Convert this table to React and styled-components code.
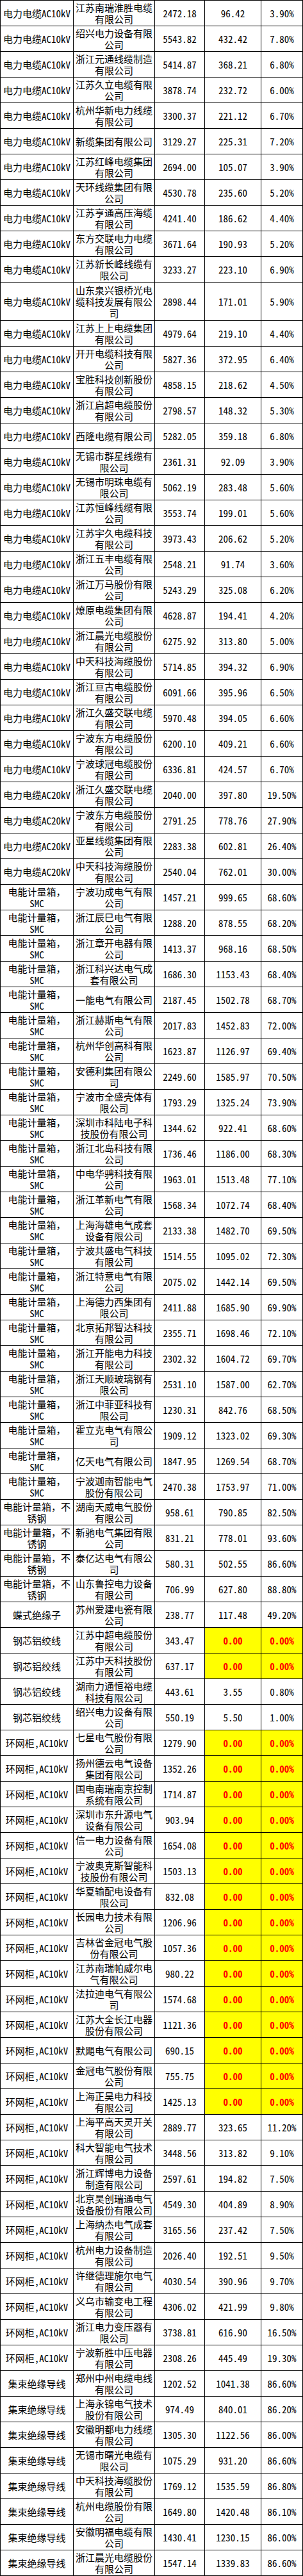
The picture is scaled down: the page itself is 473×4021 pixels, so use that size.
import React from 'react';
import styled, { createGlobalStyle } from 'styled-components';

const GlobalStyle = createGlobalStyle`
  html, body {
    margin: 0;
    padding: 0;
    background: #ffffff;
  }
`;

const Sheet = styled.div`
  display: grid;
  grid-template-columns: 113px 126px 77px 87px 64px;
  gap: 1px;
  padding: 1px;
  width: 473px;
  box-sizing: border-box;
  background: #000000;
  font-family: "Noto Sans Mono CJK SC", "Noto Sans CJK SC", "Liberation Mono", monospace;
  font-size: 15px;
  line-height: 18px;
  color: #000000;
`;

const Cell = styled.div`
  display: flex;
  align-items: center;
  justify-content: center;
  text-align: center;
  padding: 0 2px;
  min-height: ${(p) => (p.$tall ? 59 : 39)}px;
  background: ${(p) => (p.$flag ? '#ffff00' : '#ffffff')};
  color: ${(p) => (p.$flag ? '#ff0000' : '#000000')};
  font-weight: ${(p) => (p.$flag ? 700 : 400)};
  word-break: normal;
  overflow-wrap: anywhere;
`;

const groups = [
  {
    name: '电力电缆AC10kV',
    rows: [
      ['江苏南瑞淮胜电缆有限公司', '2472.18', '96.42', '3.90%'],
      ['绍兴电力设备有限公司', '5543.82', '432.42', '7.80%'],
      ['浙江元通线缆制造有限公司', '5414.87', '368.21', '6.80%'],
      ['江苏久立电缆有限公司', '3878.74', '232.72', '6.00%'],
      ['杭州华新电力线缆有限公司', '3300.37', '221.12', '6.70%'],
      ['新缆集团有限公司', '3129.27', '225.31', '7.20%'],
      ['江苏红峰电缆集团有限公司', '2694.00', '105.07', '3.90%'],
      ['天环线缆集团有限公司', '4530.78', '235.60', '5.20%'],
      ['江苏亨通高压海缆有限公司', '4241.40', '186.62', '4.40%'],
      ['东方交联电力电缆有限公司', '3671.64', '190.93', '5.20%'],
      ['江苏新长峰线缆有限公司', '3233.27', '223.10', '6.90%'],
      ['山东泉兴银桥光电缆科技发展有限公司', '2898.44', '171.01', '5.90%'],
      ['江苏上上电缆集团有限公司', '4979.64', '219.10', '4.40%'],
      ['开开电缆科技有限公司', '5827.36', '372.95', '6.40%'],
      ['宝胜科技创新股份有限公司', '4858.15', '218.62', '4.50%'],
      ['浙江启超电缆股份有限公司', '2798.57', '148.32', '5.30%'],
      ['西隆电缆有限公司', '5282.05', '359.18', '6.80%'],
      ['无锡市群星线缆有限公司', '2361.31', '92.09', '3.90%'],
      ['无锡市明珠电缆有限公司', '5062.19', '283.48', '5.60%'],
      ['江苏恒峰线缆有限公司', '3553.74', '199.01', '5.60%'],
      ['江苏宇久电缆科技有限公司', '3973.43', '206.62', '5.20%'],
      ['浙江五丰电缆有限公司', '2548.21', '91.74', '3.60%'],
      ['浙江万马股份有限公司', '5243.29', '325.08', '6.20%'],
      ['燎原电缆集团有限公司', '4628.87', '194.41', '4.20%'],
      ['浙江晨光电缆股份有限公司', '6275.92', '313.80', '5.00%'],
      ['中天科技海缆股份有限公司', '5714.85', '394.32', '6.90%'],
      ['浙江亘古电缆股份有限公司', '6091.66', '395.96', '6.50%'],
      ['浙江久盛交联电缆有限公司', '5970.48', '394.05', '6.60%'],
      ['宁波东方电缆股份有限公司', '6200.10', '409.21', '6.60%'],
      ['宁波球冠电缆股份有限公司', '6336.81', '424.57', '6.70%'],
    ],
  },
  {
    name: '电力电缆AC20kV',
    rows: [
      ['浙江久盛交联电缆有限公司', '2040.00', '397.80', '19.50%'],
      ['宁波东方电缆股份有限公司', '2791.25', '778.76', '27.90%'],
      ['亚星线缆集团有限公司', '2283.38', '602.81', '26.40%'],
      ['中天科技海缆股份有限公司', '2540.04', '762.01', '30.00%'],
    ],
  },
  {
    name: '电能计量箱，SMC',
    rows: [
      ['宁波功成电气有限公司', '1457.21', '999.65', '68.60%'],
      ['浙江辰巳电气有限公司', '1288.20', '878.55', '68.20%'],
      ['浙江章开电器有限公司', '1413.37', '968.16', '68.50%'],
      ['浙江科兴达电气成套有限公司', '1686.30', '1153.43', '68.40%'],
      ['一能电气有限公司', '2187.45', '1502.78', '68.70%'],
      ['浙江赫斯电气有限公司', '2017.83', '1452.83', '72.00%'],
      ['杭州华创高科有限公司', '1623.87', '1126.97', '69.40%'],
      ['安德利集团有限公司', '2249.60', '1585.97', '70.50%'],
      ['宁波市全盛壳体有限公司', '1793.29', '1325.24', '73.90%'],
      ['深圳市科陆电子科技股份有限公司', '1344.62', '922.41', '68.60%'],
      ['浙江北岛科技有限公司', '1736.46', '1186.00', '68.30%'],
      ['中电华骋科技有限公司', '1963.01', '1513.48', '77.10%'],
      ['浙江革新电气有限公司', '1568.34', '1072.74', '68.40%'],
      ['上海海雄电气成套设备有限公司', '2133.38', '1482.70', '69.50%'],
      ['宁波共盛电气科技有限公司', '1514.55', '1095.02', '72.30%'],
      ['浙江特意电气有限公司', '2075.02', '1442.14', '69.50%'],
      ['上海德力西集团有限公司', '2411.88', '1685.90', '69.90%'],
      ['北京拓邦智达科技有限公司', '2355.71', '1698.46', '72.10%'],
      ['浙江开能电力科技有限公司', '2302.32', '1604.72', '69.70%'],
      ['浙江天顺玻璃钢有限公司', '2531.10', '1587.00', '62.70%'],
      ['浙江中菲亚科技有限公司', '1230.31', '842.76', '68.50%'],
      ['霍立克电气有限公司', '1909.12', '1323.02', '69.30%'],
      ['亿天电气有限公司', '1847.95', '1269.54', '68.70%'],
      ['宁波迦南智能电气股份有限公司', '2470.38', '1753.97', '71.00%'],
    ],
  },
  {
    name: '电能计量箱，不锈钢',
    rows: [
      ['湖南天威电气股份有限公司', '958.61', '790.85', '82.50%'],
      ['新驰电气集团有限公司', '831.21', '778.01', '93.60%'],
      ['泰亿达电气有限公司', '580.31', '502.55', '86.60%'],
      ['山东鲁控电力设备有限公司', '706.99', '627.80', '88.80%'],
    ],
  },
  {
    name: '蝶式绝缘子',
    rows: [['苏州爱建电瓷有限公司', '238.77', '117.48', '49.20%']],
  },
  {
    name: '钢芯铝绞线',
    rows: [
      ['江苏中超电缆股份有限公司', '343.47', '0.00', '0.00%'],
      ['江苏中天科技股份有限公司', '637.17', '0.00', '0.00%'],
      ['湖南力通恒裕电缆科技有限公司', '443.61', '3.55', '0.80%'],
      ['绍兴电力设备有限公司', '550.19', '5.50', '1.00%'],
    ],
  },
  {
    name: '环网柜,AC10kV',
    rows: [
      ['七星电气股份有限公司', '1279.90', '0.00', '0.00%'],
      ['扬州德云电气设备集团有限公司', '1352.26', '0.00', '0.00%'],
      ['国电南瑞南京控制系统有限公司', '1714.87', '0.00', '0.00%'],
      ['深圳市东升源电气设备有限公司', '903.94', '0.00', '0.00%'],
      ['信一电力设备有限公司', '1654.08', '0.00', '0.00%'],
      ['宁波奥克斯智能科技股份有限公司', '1503.13', '0.00', '0.00%'],
      ['华夏输配电设备有限公司', '832.08', '0.00', '0.00%'],
      ['长园电力技术有限公司', '1206.96', '0.00', '0.00%'],
      ['吉林省金冠电气股份有限公司', '1057.36', '0.00', '0.00%'],
      ['江苏南瑞帕威尔电气有限公司', '980.22', '0.00', '0.00%'],
      ['法拉迪电气有限公司', '1574.68', '0.00', '0.00%'],
      ['江苏大全长江电器股份有限公司', '1121.36', '0.00', '0.00%'],
      ['默飓电气有限公司', '690.15', '0.00', '0.00%'],
      ['金冠电气股份有限公司', '755.75', '0.00', '0.00%'],
      ['上海正昊电力科技有限公司', '1425.13', '0.00', '0.00%'],
      ['上海平高天灵开关有限公司', '2889.77', '323.65', '11.20%'],
      ['科大智能电气技术有限公司', '3448.56', '313.82', '9.10%'],
      ['浙江辉博电力设备制造有限公司', '2597.61', '194.82', '7.50%'],
      ['北京昊创瑞通电气设备股份有限公司', '4549.30', '404.89', '8.90%'],
      ['上海纳杰电气成套有限公司', '3165.56', '237.42', '7.50%'],
      ['杭州电力设备制造有限公司', '2026.40', '192.51', '9.50%'],
      ['许继德理施尔电气有限公司', '4030.54', '390.96', '9.70%'],
      ['义乌市输变电工程有限公司', '4306.02', '421.99', '9.80%'],
      ['浙江电力变压器有限公司', '3738.81', '616.90', '16.50%'],
      ['宁波新胜中压电器有限公司', '2308.26', '445.49', '19.30%'],
    ],
  },
  {
    name: '集束绝缘导线',
    rows: [
      ['郑州中州电缆电线有限公司', '1202.52', '1041.38', '86.60%'],
      ['上海永锦电气技术股份有限公司', '974.49', '840.01', '86.20%'],
      ['安徽明都电力线缆有限公司', '1305.30', '1122.56', '86.00%'],
      ['无锡市曙光电缆有限公司', '1075.29', '931.20', '86.60%'],
      ['中天科技海缆股份有限公司', '1769.12', '1535.59', '86.80%'],
      ['杭州电缆股份有限公司', '1649.80', '1420.48', '86.10%'],
      ['安徽明福电缆有限公司', '1430.41', '1230.15', '86.00%'],
      ['浙江晨光电缆股份有限公司', '1547.14', '1339.83', '86.60%'],
    ],
  },
];

export default function App() {
  return (
    <>
      <GlobalStyle />
      <Sheet>
        {groups.map((g) =>
          g.rows.map(([company, total, part, ratio], i) => {
            const flag = part === '0.00';
            const tall = company.length > 16;
            return (
              <React.Fragment key={g.name + i}>
                <Cell $tall={tall}>{g.name}</Cell>
                <Cell $tall={tall}>{company}</Cell>
                <Cell $tall={tall}>{total}</Cell>
                <Cell $tall={tall} $flag={flag}>{part}</Cell>
                <Cell $tall={tall} $flag={flag}>{ratio}</Cell>
              </React.Fragment>
            );
          })
        )}
      </Sheet>
    </>
  );
}
